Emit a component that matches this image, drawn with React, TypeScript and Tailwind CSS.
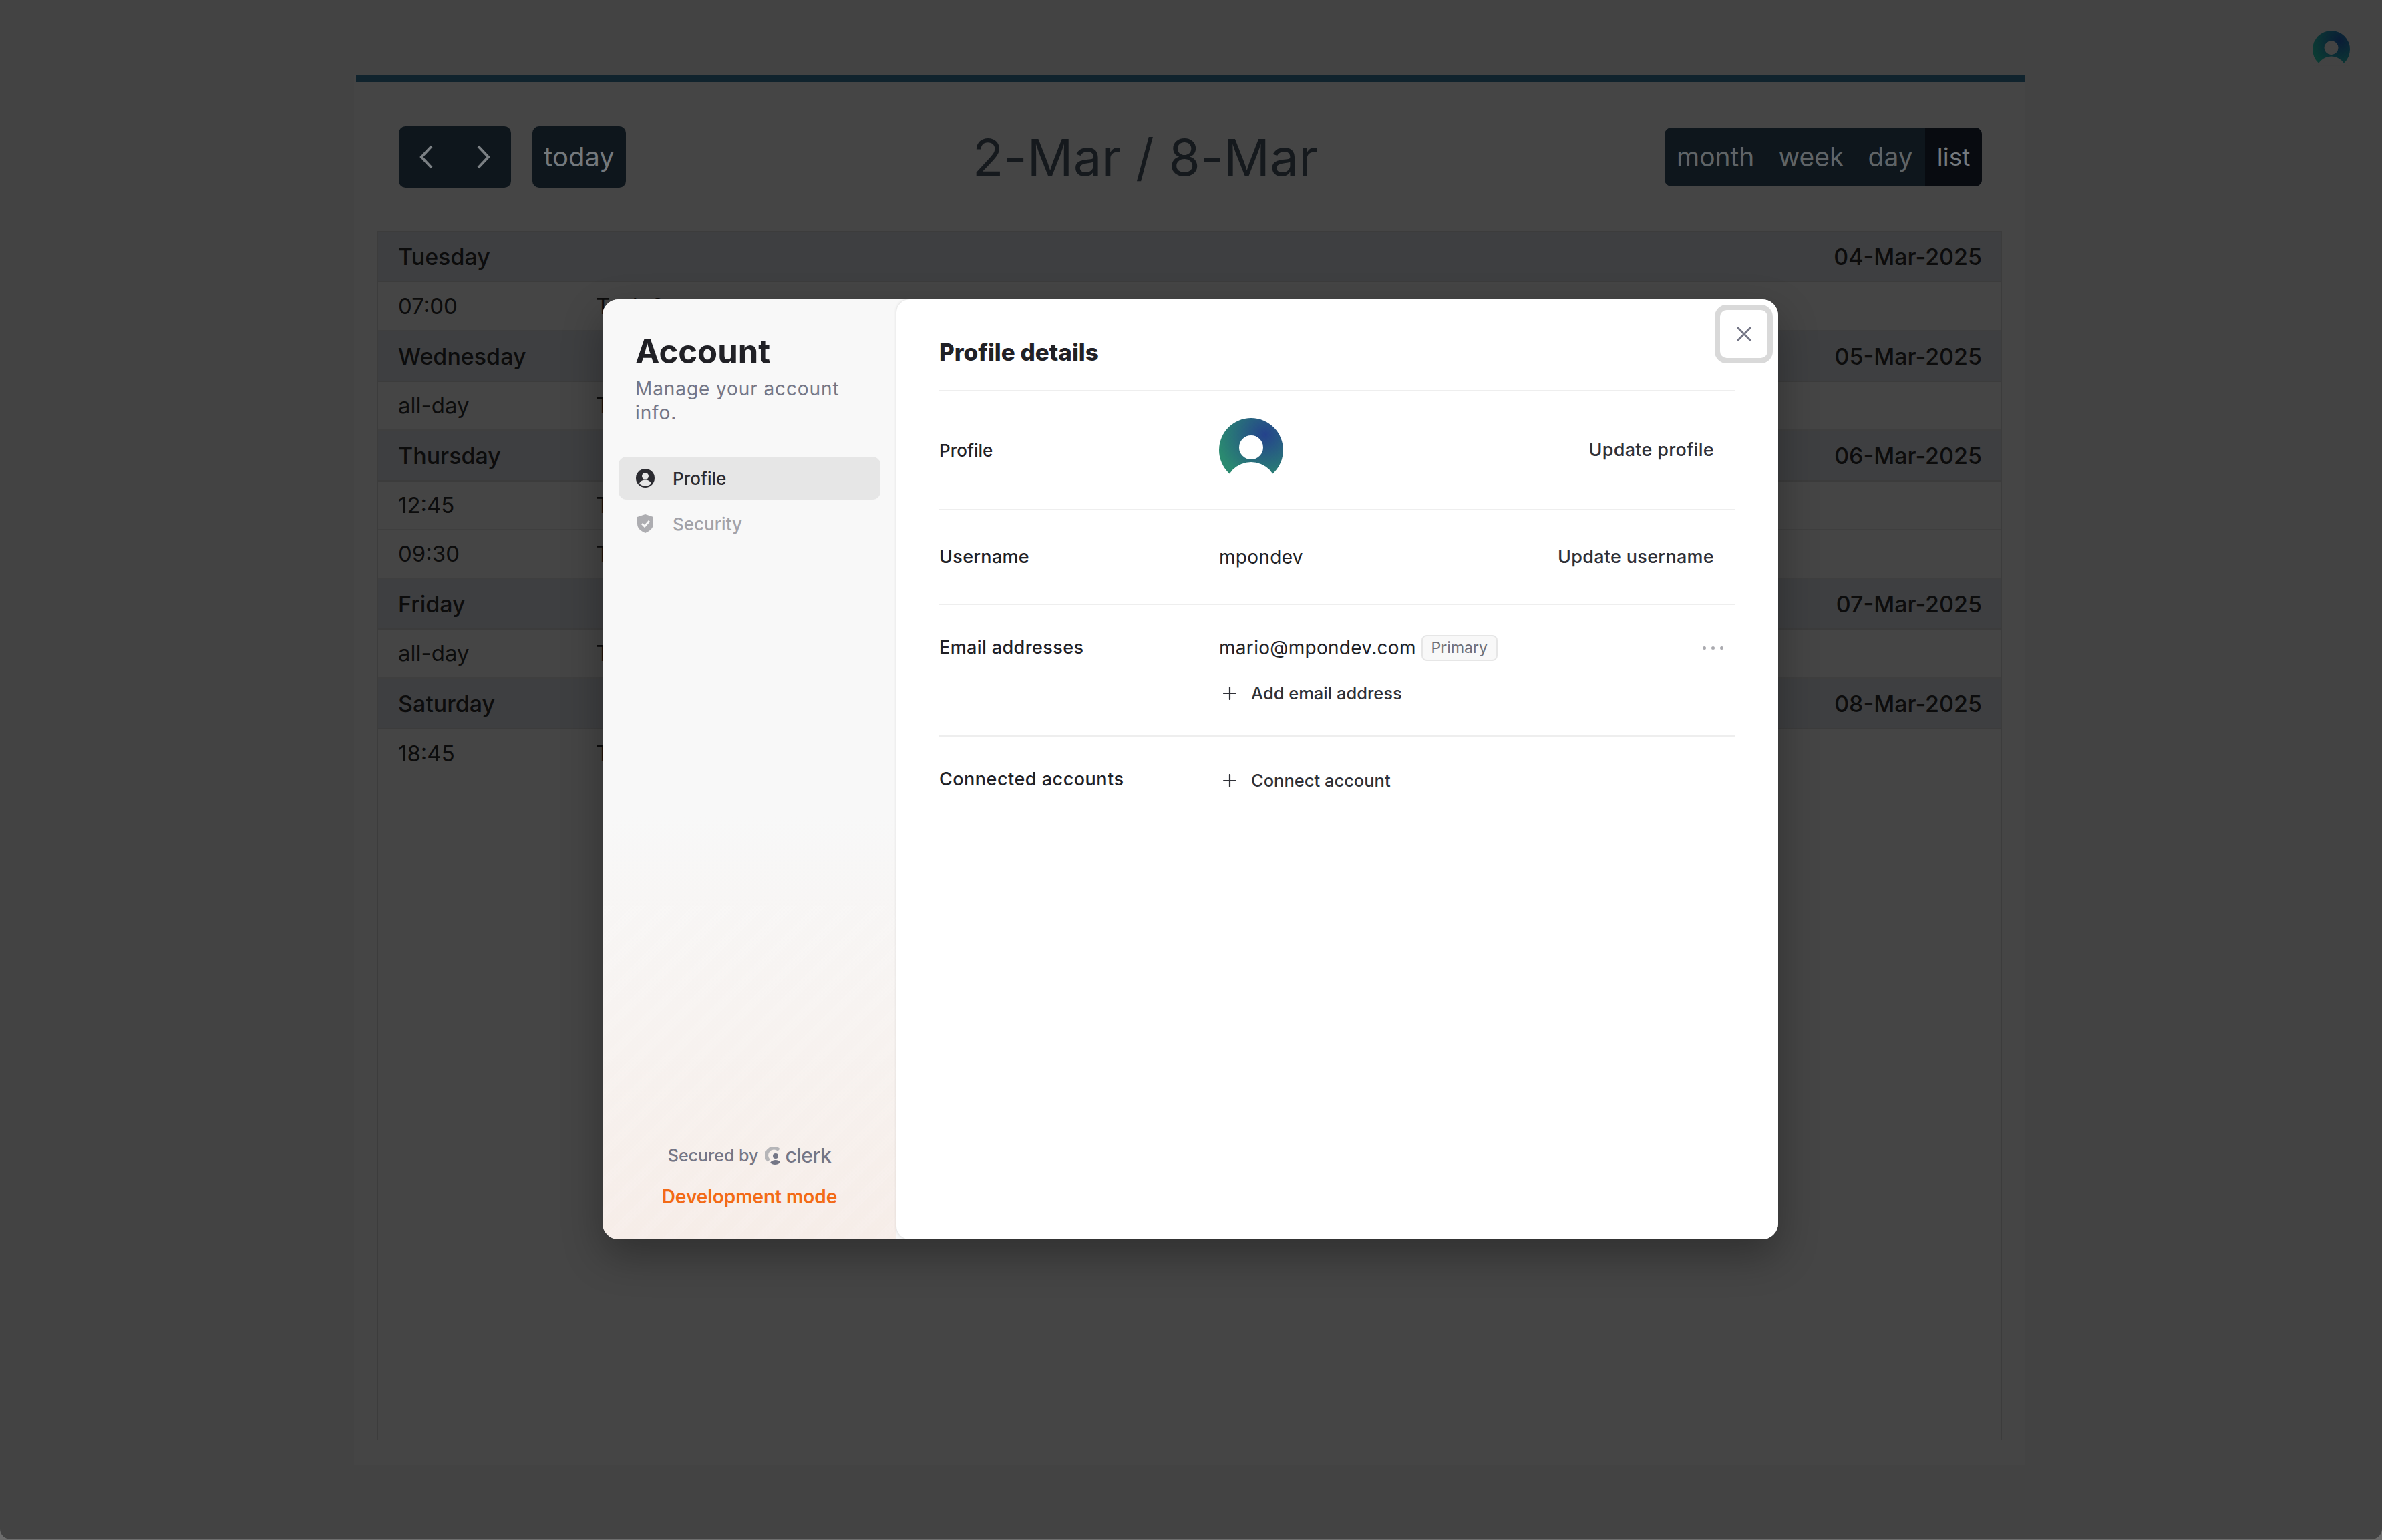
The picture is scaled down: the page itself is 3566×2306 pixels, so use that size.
import React from "react";

const rows: { k: "h" | "r"; a: string; b: string }[] = [
  { k: "h", a: "Tuesday", b: "04-Mar-2025" },
  { k: "r", a: "07:00", b: "Task 3" },
  { k: "h", a: "Wednesday", b: "05-Mar-2025" },
  { k: "r", a: "all-day", b: "Task 2" },
  { k: "h", a: "Thursday", b: "06-Mar-2025" },
  { k: "r", a: "12:45", b: "Task 1" },
  { k: "r", a: "09:30", b: "Task 4" },
  { k: "h", a: "Friday", b: "07-Mar-2025" },
  { k: "r", a: "all-day", b: "Task 5" },
  { k: "h", a: "Saturday", b: "08-Mar-2025" },
  { k: "r", a: "18:45", b: "Task 6" },
];

function Avatar({ size, cut, id }: { size: number; cut: string; id: string }) {
  return (
    <svg width={size} height={size} viewBox="0 0 96 96" className="block shrink-0">
      <defs>
        <radialGradient id={id} cx="0.72" cy="0.26" r="0.75">
          <stop offset="0" stopColor={id === "a1" ? "#25428c" : "#0a1c36"} />
          <stop offset="1" stopColor={id === "a1" ? "#2a8a70" : "#0b3a33"} />
        </radialGradient>
      </defs>
      <circle cx="48" cy="48" r="48" fill={`url(#${id})`} />
      <circle cx="48" cy="104.6" r="38.6" fill={cut} />
      <circle cx="48" cy="44" r="18" fill={cut} />
      <rect x="0" y="90" width="96" height="6" fill={cut} />
    </svg>
  );
}

function Plus() {
  return (
    <svg width="20" height="20" viewBox="0 0 20 20" className="shrink-0" fill="none" stroke="#2f3037" strokeWidth="2.200" strokeLinecap="round">
      <path d="M10 1v18M1 10h18" />
    </svg>
  );
}

export default function App() {
  return (
    <div className="relative h-[2306px] w-[3566px] overflow-hidden bg-[#6d6d6d] font-['Inter','Liberation_Sans',sans-serif]">
      <div className="h-[2305px] rounded-b-[16px] bg-[#434343]">
        <div className="flex h-[113px] justify-end pr-[48px] pt-[46px]">
          <Avatar size={56} cut="#434343" id="a2" />
        </div>
        <div className="ml-[530px] flex h-[2080px] w-[2502px] flex-col bg-[#454545]">
          <div className="ml-[3px] h-[10px] bg-[#10232d]" />
          <div className="mt-[66px] flex h-[92px] items-center justify-between pl-[67px] pr-[65px]">
            <div className="flex gap-[32px]">
              <div className="flex h-[92px] w-[168px] items-center gap-[64px] rounded-[10px] bg-[#0e161c] pl-[29px] text-[#7b8084]">
                <svg width="23" height="36" viewBox="0 0 23 36" fill="none" stroke="currentColor" strokeWidth="4"><path d="M20 2 5 18l15 16" /></svg>
                <svg width="23" height="36" viewBox="0 0 23 36" fill="none" stroke="currentColor" strokeWidth="4"><path d="M3 2l15 16L3 34" /></svg>
              </div>
              <div className="flex h-[92px] w-[140px] items-center justify-center rounded-[10px] bg-[#0e161c] text-[40px] text-[#74797d]">today</div>
            </div>
            <div className="text-[76px] leading-none tracking-[0.3px] text-[#15191d]">2-Mar / 8-Mar</div>
            <div className="flex h-[88px] w-[475px] items-center overflow-hidden rounded-[10px] bg-[#0e161c] text-[39px] text-[#5f6467]">
              <div className="flex h-full w-[390px] items-center gap-[36px] pl-[18px]">
                <span>month</span>
                <span>week</span>
                <span>day</span>
              </div>
              <div className="flex h-full flex-1 items-center justify-center bg-[#080b10] text-[37px] text-[#74797d]">list</div>
            </div>
          </div>
          <div className="mx-[35px] mt-[65px] h-[1811px] border border-[#3c3c3c] text-[33px] text-[#0c0c0c]">
            {rows.map((r, i) =>
              r.k === "h" ? (
                <div key={i} className="flex h-[76px] items-center justify-between border-b-2 border-[#3c3c3c] bg-[#3e3f41] pl-[30px] pr-[29px] text-[34px] font-medium">
                  <span>{r.a}</span>
                  <span>{r.b}</span>
                </div>
              ) : (
                <div key={i} className={i === rows.length - 1 ? "flex h-[73px] items-center pl-[30px]" : "flex h-[73px] items-center border-b-2 border-[#3f3f3f] pl-[30px]"}>
                  <span className="w-[296px]">{r.a}</span>
                  <span>{r.b}</span>
                </div>
              )
            )}
          </div>
        </div>
      </div>

      {/* account dialog */}
      <div className="absolute left-[902px] top-[448px] flex h-[1408px] w-[1760px] overflow-hidden rounded-[24px] bg-[#f8f8f8] shadow-[0_24px_60px_rgba(0,0,0,0.3)]">
        <aside className="relative flex w-[440px] shrink-0 flex-col bg-[linear-gradient(to_bottom,#f8f8f8_55%,#f6ede8_100%)] px-[24px] pb-[43px]">
          <div className="pointer-events-none absolute inset-x-0 bottom-0 h-[500px] bg-[repeating-linear-gradient(135deg,rgba(255,255,255,0.08)_0_14px,rgba(255,255,255,0)_14px_32px)]" />
          <div className="relative pl-[25px] pt-[46px]">
            <h1 className="text-[49px] font-bold leading-[66px] text-[#212126]">Account</h1>
            <p className="mt-[4px] w-[320px] text-[28px] leading-[36px] tracking-[0.9px] text-[#747686]">Manage your account info.</p>
          </div>
          <nav className="relative mt-[48px] flex flex-col gap-[4px]">
            <div className="flex h-[64px] items-center gap-[27px] rounded-[12px] bg-[#e6e6e6] pl-[26px] text-[26px] font-medium text-[#2b2b30]">
              <svg width="28" height="28" viewBox="0 0 28 28" className="shrink-0">
                <circle cx="14" cy="14" r="14" fill="#2b2b30" />
                <circle cx="14" cy="11" r="5" fill="#e6e6e6" />
                <path d="M5 22c2-4 5-5.500 9-5.500s7 1.500 9 5.500c-2 2.500-5.500 3.500-9 3.500S7 24.500 5 22Z" fill="#e6e6e6" />
              </svg>
              <span>Profile</span>
            </div>
            <div className="flex h-[64px] items-center gap-[27px] pl-[26px] text-[26px] font-medium text-[#a2a2a8]">
              <svg width="28" height="28" viewBox="0 0 28 28" className="shrink-0">
                <path d="M14 0 26 4v10c0 7-5 11-12 14C7 25 2 21 2 14V4Z" fill="#adadb1" />
                <path d="m9 14 4 4 7-8" fill="none" stroke="#f8f8f8" strokeWidth="3" />
              </svg>
              <span>Security</span>
            </div>
          </nav>
          <div className="relative mt-auto flex flex-col items-center">
            <div className="flex items-center text-[25px] font-medium text-[#747686]">
              <span>Secured by</span>
              <svg width="28" height="28" viewBox="0 0 28 28" className="ml-[10px] shrink-0">
                <path d="M21 5A10.500 10.500 0 0 0 6 21" fill="none" stroke="#b5b5b8" strokeWidth="5" />
                <circle cx="16" cy="14" r="4" fill="#747686" />
                <path d="M8 24c2-3 5-4 8-4s5 1 7 3c-2 3-5 4-8 4-3 0-5-1-7-3Z" fill="#747686" />
              </svg>
              <span className="ml-[2px] text-[30px] tracking-[-0.5px]">clerk</span>
            </div>
            <div className="mt-[18px] text-[28px] font-semibold text-[#f36b16]">Development mode</div>
          </div>
        </aside>

        <main className="relative flex-1 rounded-l-[20px] bg-white pl-[64px] pr-[64px] pt-[50px] shadow-[0_0_4px_rgba(0,0,0,0.15)]">
          <button className="absolute right-[8px] top-[8px] flex h-[88px] w-[87px] items-center justify-center rounded-[18px] border-[8px] border-[#d9d9d9] bg-white">
            <svg width="24" height="24" viewBox="0 0 24 24" fill="none" stroke="#747686" strokeWidth="3"><path d="M2 2l20 20M22 2 2 22" /></svg>
          </button>
          <h2 className="h-[88px] border-b-2 border-[#eeeeee] text-[35px] font-extrabold leading-[58px] text-[#212126]">Profile details</h2>
          <div className="flex h-[178px] items-center border-b-2 border-[#eeeeee] text-[26px] font-medium text-[#212126]">
            <div className="w-[419px]">Profile</div>
            <Avatar size={96} cut="#ffffff" id="a1" />
            <div className="ml-auto pr-[32px] text-[27px] tracking-[0.3px] text-[#2f3037]">Update profile</div>
          </div>
          <div className="flex h-[142px] items-center border-b-2 border-[#eeeeee] text-[27px] tracking-[0.3px] text-[#212126]">
            <div className="w-[419px] font-medium">Username</div>
            <div className="text-[28px]">mpondev</div>
            <div className="ml-auto pr-[32px] font-medium text-[#2f3037]">Update username</div>
          </div>
          <div className="flex h-[197px] items-start border-b-2 border-[#eeeeee] pt-[44px] text-[27px] text-[#212126]">
            <div className="w-[419px] font-medium tracking-[0.4px]">Email addresses</div>
            <div className="flex-1">
              <div className="flex h-[40px] items-center">
                <span className="text-[28px] tracking-[0.3px]">mario@mpondev.com</span>
                <span className="ml-[8px] flex h-[39px] w-[114px] items-center justify-center rounded-[8px] border-2 border-[#e6e6e6] bg-[#f8f8f8] text-[23px] text-[#6f6f76]">Primary</span>
                <span className="ml-auto mr-[18px] flex gap-[8px]">
                  <i className="h-[5px] w-[5px] rounded-full bg-[#aaaaaf]" />
                  <i className="h-[5px] w-[5px] rounded-full bg-[#aaaaaf]" />
                  <i className="h-[5px] w-[5px] rounded-full bg-[#aaaaaf]" />
                </span>
              </div>
              <div className="mt-[28px] flex h-[40px] items-center gap-[22px] pl-[6px] text-[25.500px] font-medium text-[#2f3037]">
                <Plus />
                <span>Add email address</span>
              </div>
            </div>
          </div>
          <div className="flex items-start pt-[44px] text-[27px] font-medium text-[#212126]">
            <div className="w-[419px] tracking-[0.5px]">Connected accounts</div>
            <div className="flex h-[40px] translate-y-[2px] items-center gap-[22px] pl-[6px] text-[25.500px] text-[#2f3037]">
              <Plus />
              <span>Connect account</span>
            </div>
          </div>
        </main>
      </div>
    </div>
  );
}
